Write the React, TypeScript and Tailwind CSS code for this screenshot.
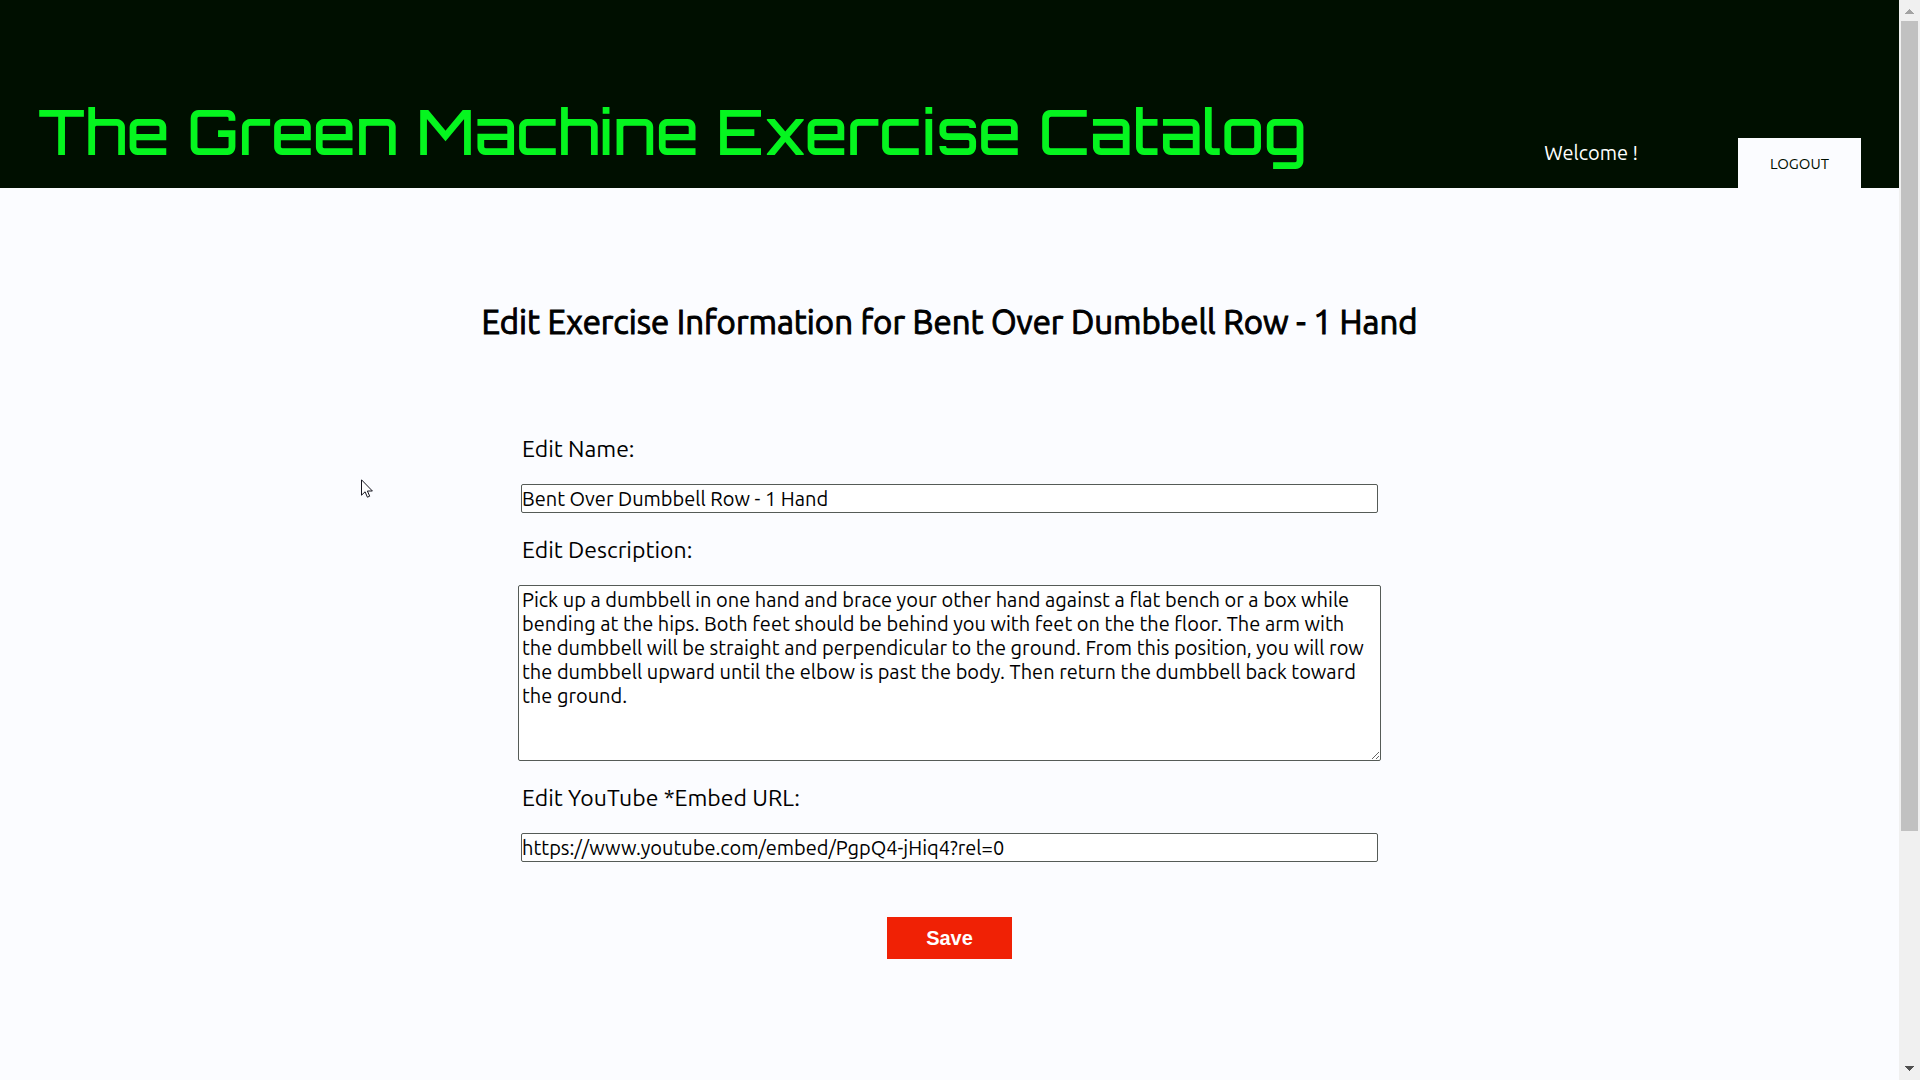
import React, { useState } from "react";

const DESCRIPTION =
  "Pick up a dumbbell in one hand and brace your other hand against a flat bench or a box while bending at the hips. Both feet should be behind you with feet on the the floor. The arm with the dumbbell will be straight and perpendicular to the ground. From this position, you will row the dumbbell upward until the elbow is past the body. Then return the dumbbell back toward the ground.";

const labelClass = "mt-[23px] mb-[21px] block pl-1 text-[23px] leading-7";
const inputClass =
  "mx-auto block h-[29px] w-[calc(100%-6px)] rounded-[2px] border border-[#555b57] bg-white text-xl leading-6 outline-none";

function Header() {
  return (
    <header className="flex h-[188px] items-end bg-[#000f00] px-[38px]">
      <h1 className="mb-[22px] grow whitespace-nowrap font-[Orbitron,'DejaVu_Sans',sans-serif] text-[62px] leading-[70px] font-medium text-[#05f51f]">
        The Green Machine Exercise Catalog
      </h1>
      <p className="mr-[100px] mb-[21px] text-xl leading-7 text-white">Welcome !</p>
      <button type="button" className="h-[50px] bg-[#fbfcff] px-8 pt-0.5 text-[15px] text-[#000f00]">
        LOGOUT
      </button>
    </header>
  );
}

function EditForm() {
  const [name, setName] = useState("Bent Over Dumbbell Row - 1 Hand");
  const [description, setDescription] = useState(DESCRIPTION);
  const [url, setUrl] = useState("https://www.youtube.com/embed/PgpQ4-jHiq4?rel=0");

  return (
    <form className="mx-auto mt-[93px] max-w-[863px]" onSubmit={(e) => e.preventDefault()}>
      <label htmlFor="name" className={labelClass}>
        Edit Name:
      </label>
      <input id="name" className={inputClass} value={name} onChange={(e) => setName(e.target.value)} />

      <label htmlFor="description" className={labelClass}>
        Edit Description:
      </label>
      <textarea
        id="description"
        className="block h-[176px] w-full resize rounded-[2px] border border-[#555b57] bg-white px-[3px] py-[2px] text-xl leading-6 outline-none"
        value={description}
        onChange={(e) => setDescription(e.target.value)}
      />

      <label htmlFor="url" className={labelClass}>
        Edit YouTube *Embed URL:
      </label>
      <input id="url" className={inputClass} value={url} onChange={(e) => setUrl(e.target.value)} />

      <button
        type="submit"
        className="mx-auto mt-[55px] block h-[42px] w-[125px] bg-[#f02105] font-['Liberation_Sans',Arial,sans-serif] text-xl font-bold text-white"
      >
        Save
      </button>
    </form>
  );
}

function ScrollBar() {
  return (
    <div className="flex w-[21px] shrink-0 flex-col items-center bg-[#f0f0f0]" aria-hidden="true">
      <svg className="h-[21px] w-[21px]" viewBox="0 0 21 21" shapeRendering="crispEdges">
        <path d="M10 9h1v1h1v1h1v1h1v1h1v1H6v-1h1v-1h1v-1h1v-1h1z" fill="#a3a3a3" />
      </svg>
      <div className="flex w-[17px] grow flex-col">
        <div className="h-[78%] bg-[#c1c1c1]" />
      </div>
      <svg className="h-[21px] w-[21px]" viewBox="0 0 21 21" shapeRendering="crispEdges">
        <path d="M6 7h9v1h-1v1h-1v1h-1v1h-1v1h-1v-1H9v-1H8V9H7V8H6z" fill="#505050" />
      </svg>
    </div>
  );
}

function Pointer() {
  return (
    <svg
      className="pointer-events-none absolute top-[479px] left-[361px] h-[19px] w-[12px]"
      viewBox="0 0 12 19"
      aria-hidden="true"
    >
      <path
        d="M.5.8v15.4l3.6-3.4 2.3 5.4 2.3-1-2.3-5.2h5z"
        fill="#fff"
        stroke="#15151f"
        strokeWidth="1"
      />
    </svg>
  );
}

export default function App() {
  return (
    <div className="relative flex min-h-screen bg-[#fbfcff] font-[Ubuntu,'Noto_Sans',sans-serif] text-black">
      <div className="min-w-0 grow overflow-hidden">
        <Header />
        <main className="pt-[114px]">
          <h2 className="text-center text-[33px] leading-10 font-normal [-webkit-text-stroke:1px_black]">
            Edit Exercise Information for Bent Over Dumbbell Row - 1 Hand
          </h2>
          <EditForm />
        </main>
      </div>
      <ScrollBar />
      <Pointer />
    </div>
  );
}
